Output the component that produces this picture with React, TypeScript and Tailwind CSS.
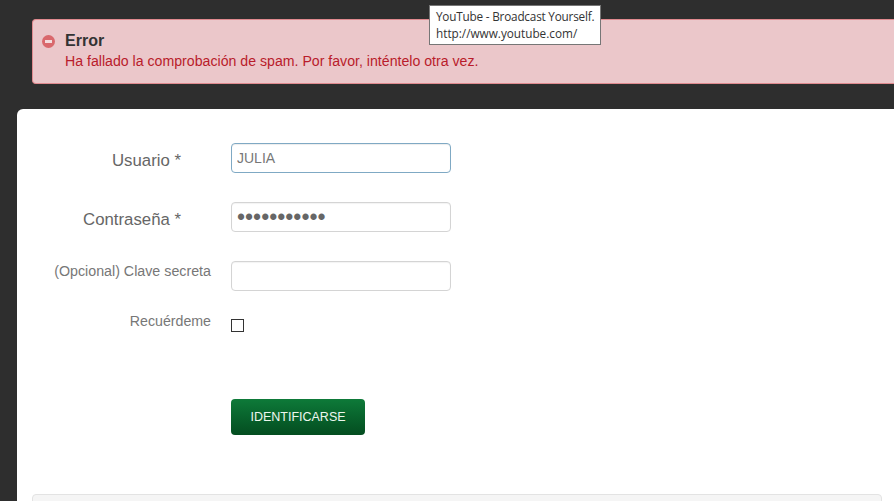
// Login page with spam error alert
export default function App() {
  return (
    <div className="relative h-[501px] w-[894px] overflow-hidden bg-[#2e2e2e] font-['Liberation_Sans',Arial,sans-serif]">
      {/* Error alert */}
      <div className="ml-8 mt-[19px] flex h-[65px] w-[900px] rounded-l border border-[#e08a8f] border-r-0 bg-[#ebc7ca] pl-[9px] pt-[12px]">
        <svg className="mt-[3px] h-[13px] w-[13px] shrink-0" viewBox="0 0 13 13">
          <circle cx="6.5" cy="6.5" r="6.5" fill="#d9686c" />
          <rect x="3" y="5" width="7" height="3" fill="#f3dcdd" />
        </svg>
        <div className="ml-[10px]">
          <div className="text-[16px] font-bold leading-[18px] text-[#333333]">Error</div>
          <div className="mt-[1px] text-[14.15px] leading-[20px] text-[#b91c2b]">
            Ha fallado la comprobación de spam. Por favor, inténtelo otra vez.
          </div>
        </div>
      </div>

      {/* Login card */}
      <div className="ml-[17px] mt-[25px] h-[500px] w-[890px] rounded-tl-md bg-white pt-[34px]">
        <form className="flex flex-col">
          <div className="flex h-[30px] items-center">
            <label className="w-[164px] pt-[6px] text-right text-[16.8px] text-[#666666]">Usuario *</label>
            <input
              readOnly
              value="JULIA"
              className="ml-[50px] h-[30px] w-[220px] rounded border border-[#7fa9c4] bg-white px-[5px] text-[14px] text-[#777777] shadow-[inset_0_1px_1px_rgba(0,0,0,0.075)] outline-none"
            />
          </div>
          <div className="mt-[29px] flex h-[30px] items-center">
            <label className="w-[164px] pt-[6px] text-right text-[16.8px] text-[#666666]">Contraseña *</label>
            <input
              readOnly
              type="password"
              value="12345678901"
              className="ml-[50px] h-[30px] w-[220px] rounded border border-[#d4d4d4] bg-white px-[5px] text-[23px] text-[#666666] shadow-[inset_0_1px_1px_rgba(0,0,0,0.05)] outline-none"
            />
          </div>
          <div className="mt-[29px] flex h-[30px] items-start">
            <label className="w-[194px] whitespace-nowrap text-right text-[14.25px] text-[#777777]">(Opcional) Clave secreta</label>
            <input
              readOnly
              className="ml-[20px] h-[30px] w-[220px] rounded border border-[#d4d4d4] bg-white shadow-[inset_0_1px_1px_rgba(0,0,0,0.05)] outline-none"
            />
          </div>
          <div className="mt-[20px] flex items-start">
            <label className="w-[194px] text-right text-[14.2px] text-[#777777]">Recuérdeme</label>
            <span className="ml-[20px] mt-[8px] h-[13px] w-[13px] border border-[#333333] bg-white" />
          </div>
          <button
            type="button"
            className="ml-[214px] mt-[67px] h-[36px] w-[134px] rounded bg-gradient-to-b from-[#0e7a39] to-[#044d20] text-[12.5px] text-[#eef7ef]"
          >
            IDENTIFICARSE
          </button>
        </form>

        {/* Bottom panel */}
        <div className="ml-[15px] mt-[59px] h-[40px] w-[850px] rounded border border-[#e3e3e3] bg-[#f5f5f5]" />
      </div>

      {/* Browser tooltip over the alert */}
      <div className="absolute left-[429px] top-[5px] h-[40px] w-[172px] whitespace-nowrap border border-[#767676] bg-white pl-[6px] pt-[2px] font-['Open_Sans',sans-serif] text-[11.75px] leading-[17px] text-[#333333]">
        <div className="tracking-[-0.2px]">YouTube - Broadcast Yourself.</div>
        <div>http://www.youtube.com/</div>
      </div>
    </div>
  );
}
